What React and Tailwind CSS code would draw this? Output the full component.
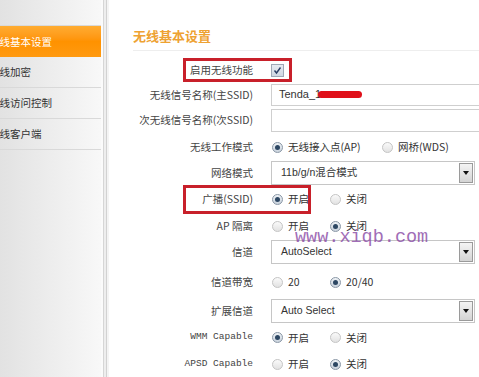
import React from "react";

const cjk = { fontFamily: '"Noto Sans CJK SC", "Noto Sans", sans-serif' };

function Radio({ checked }) {
  return checked ? (
    <span className="inline-flex w-[11px] h-[11px] rounded-full border border-[#8a97a6] bg-gradient-to-b from-[#eef2f6] to-[#c9d2dc] items-center justify-center shrink-0">
      <span className="w-[5px] h-[5px] rounded-full bg-[#2d4763]" />
    </span>
  ) : (
    <span className="inline-block w-[11px] h-[11px] rounded-full border border-[#c4c4c4] bg-gradient-to-b from-[#fafafa] to-[#e2e2e2] shrink-0" />
  );
}

function Opt({ checked, label, w }) {
  return (
    <span className={`flex items-center gap-[5px] ${w}`}>
      <Radio checked={checked} />
      <span className="text-[10.5px] text-[#333]" style={cjk}>{label}</span>
    </span>
  );
}

function Row({ h, label, mono, children }) {
  return (
    <div className={`flex items-center ${h}`}>
      <div
        className={`w-[144px] text-right text-[#444] ${mono ? "text-[9.5px]" : "text-[10.5px]"}`}
        style={mono ? { fontFamily: '"Liberation Mono", monospace' } : cjk}
      >
        {label}
      </div>
      <div className="ml-[18px] flex items-center">{children}</div>
    </div>
  );
}

function Select({ text }) {
  return (
    <div className="w-[204px] h-[24px] border border-[#c6c6c6] bg-white flex items-center justify-between pl-[9px] pr-[1px]">
      <span className="text-[10.5px] text-[#333]" style={{ fontFamily: '"Liberation Sans", "Noto Sans CJK SC", sans-serif' }}>{text}</span>
      <span className="w-[14px] h-[20px] border border-[#9a9a9a] bg-gradient-to-b from-[#f4f4f4] to-[#d4d4d4] flex items-center justify-center">
        <span className="w-0 h-0 border-l-[3px] border-r-[3px] border-t-[4px] border-l-transparent border-r-transparent border-t-[#111]" />
      </span>
    </div>
  );
}

export default function App() {
  return (
    <div className="relative w-[479px] h-[377px] overflow-hidden bg-white flex">
      {/* Sidebar */}
      <div className="w-[101px] shrink-0 h-full bg-gradient-to-r from-[#e2e2e2] to-[#f8f8f8] flex flex-col">
        <div className="h-[26px] border-b border-[#d9d9d9]" />
        <div className="h-[31px] bg-gradient-to-b from-[#ffac30] via-[#ff9200] to-[#ff9a10] flex items-center overflow-hidden">
          <span className="ml-[-11px] text-[10.5px] text-white whitespace-nowrap" style={cjk}>无线基本设置</span>
        </div>
        {["无线加密", "无线访问控制", "无线客户端"].map((t) => (
          <div key={t} className="h-[31px] border-b border-[#d9d9d9] flex items-center overflow-hidden">
            <span className="ml-[-11px] text-[10.5px] text-[#333] whitespace-nowrap" style={cjk}>{t}</span>
          </div>
        ))}
      </div>
      {/* Separator */}
      <div className="w-[8px] shrink-0 h-full flex">
        <div className="w-[2px] bg-[#fbfbfb]" />
        <div className="w-[1px] bg-[#d6d6d6]" />
        <div className="w-[2px] bg-[#eeeeee]" />
        <div className="w-[1px] bg-[#d2d2d2]" />
        <div className="w-[2px] bg-[#f4f4f4]" />
      </div>
      {/* Content */}
      <div className="flex-1 flex flex-col">
        <div className="ml-[24px] h-[51px] border-b border-[#eeeeee] flex items-end pb-[5px]">
          <span className="text-[13px] font-bold text-[#eea232]" style={cjk}>无线基本设置</span>
        </div>
        <div className="mt-[7px] flex flex-col">
          <Row h="h-[24px]" label="启用无线功能">
            <span className="w-[13px] h-[13px] border border-[#9ea8b6] bg-gradient-to-b from-[#e6ebf2] to-[#cfd7e2] flex items-center justify-center">
              <svg width="9" height="9" viewBox="0 0 9 9">
                <path d="M1.5 4.5 L3.5 7 L7.5 1.5" fill="none" stroke="#2b3f66" strokeWidth="1.4" />
              </svg>
            </span>
          </Row>
          <Row h="h-[25px]" label="无线信号名称(主SSID)">
            <div className="w-[220px] h-[22px] border border-[#cfcfcf] flex items-center pl-[7px]">
              <span className="text-[11px] text-[#333]" style={{ fontFamily: '"Liberation Sans", sans-serif' }}>Tenda_1</span>
              <span className="inline-block w-[44px] h-[7px] bg-[#e0101a] rounded-full ml-[-3px]" />
            </div>
          </Row>
          <Row h="h-[26px]" label="次无线信号名称(次SSID)">
            <div className="w-[220px] h-[23px] border border-[#cfcfcf]" />
          </Row>
          <Row h="h-[28px]" label="无线工作模式">
            <span className="ml-[1px] flex items-center">
              <Opt checked label="无线接入点(AP)" w="w-[110px]" />
              <Opt label="网桥(WDS)" w="" />
            </span>
          </Row>
          <Row h="h-[24px]" label="网络模式">
            <Select text="11b/g/n混合模式" />
          </Row>
          <Row h="h-[28px]" label="广播(SSID)">
            <span className="ml-[1px] flex items-center">
              <Opt checked label="开启" w="w-[58px]" />
              <Opt label="关闭" w="" />
            </span>
          </Row>
          <Row h="h-[26px]" label="AP 隔离">
            <span className="ml-[1px] flex items-center">
              <Opt label="开启" w="w-[58px]" />
              <Opt checked label="关闭" w="" />
            </span>
          </Row>
          <Row h="h-[26px]" label="信道">
            <Select text="AutoSelect" />
          </Row>
          <Row h="h-[34px]" label="信道带宽">
            <span className="ml-[1px] flex items-center">
              <Opt label="20" w="w-[58px]" />
              <Opt checked label="20/40" w="" />
            </span>
          </Row>
          <Row h="h-[24px]" label="扩展信道">
            <Select text="Auto Select" />
          </Row>
          <Row h="h-[29px]" label="WMM Capable" mono>
            <span className="ml-[1px] flex items-center">
              <Opt checked label="开启" w="w-[58px]" />
              <Opt label="关闭" w="" />
            </span>
          </Row>
          <Row h="h-[24px]" label="APSD Capable" mono>
            <span className="ml-[1px] flex items-center">
              <Opt label="开启" w="w-[58px]" />
              <Opt checked label="关闭" w="" />
            </span>
          </Row>
        </div>
      </div>
      {/* Red highlight boxes */}
      <div className="absolute left-[183px] top-[58px] w-[109px] h-[24px] border-[3px] border-[#c8202a]" />
      <div className="absolute left-[183px] top-[185px] w-[128px] h-[29px] border-[3px] border-[#c8202a]" />
      {/* Watermark */}
      <div
        className="absolute left-[295px] top-[226px] text-[18.5px] leading-[24px] text-[#8a4aa6] opacity-80 whitespace-nowrap"
        style={{ fontFamily: '"Liberation Mono", monospace' }}
      >
        www.xiqb.com
      </div>
    </div>
  );
}
